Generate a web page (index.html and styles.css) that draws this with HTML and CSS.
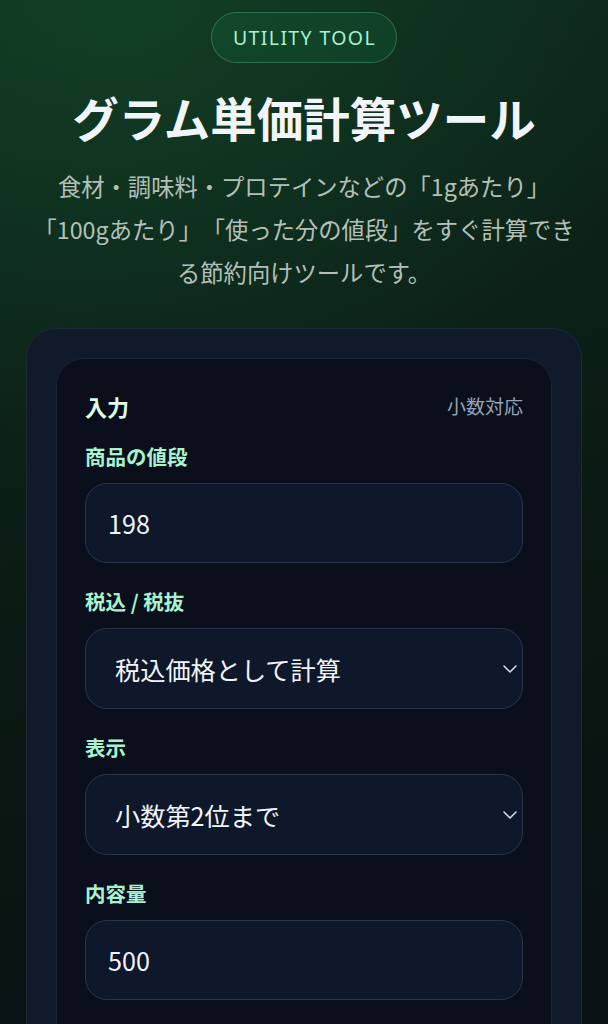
FILE: index.html
```html
<!DOCTYPE html>
<html lang="ja">
<head>
<meta charset="utf-8">
<title>グラム単価計算ツール</title>
<link rel="stylesheet" href="styles.css">
</head>
<body>
<main class="page">
  <header class="hero">
    <span class="badge">UTILITY TOOL</span>
    <h1 class="title">グラム単価計算ツール</h1>
    <p class="lead">食材・調味料・プロテインなどの「1gあたり」「100gあたり」「使った分の値段」をすぐ計算できる節約向けツールです。</p>
  </header>

  <section class="shell">
    <div class="panel">
      <div class="panel-head">
        <h2 class="panel-title">入力</h2>
        <span class="panel-note">小数対応</span>
      </div>

      <div class="fields">
        <div class="field">
          <label class="field-label" for="price">商品の値段</label>
          <input class="control" id="price" type="text" value="198">
        </div>

        <div class="field">
          <label class="field-label" for="tax">税込 / 税抜</label>
          <div class="select-wrap">
            <select class="control select" id="tax">
              <option>税込価格として計算</option>
              <option>税抜価格として計算</option>
            </select>
            <svg class="chevron" viewBox="0 0 14 8" width="14" height="8" aria-hidden="true"><path d="M1 1 L7 7 L13 1" fill="none" stroke="#d8dee8" stroke-width="1.5" stroke-linecap="round" stroke-linejoin="round"/></svg>
          </div>
        </div>

        <div class="field">
          <label class="field-label" for="digits">表示</label>
          <div class="select-wrap">
            <select class="control select" id="digits">
              <option>小数第2位まで</option>
              <option>小数第1位まで</option>
            </select>
            <svg class="chevron" viewBox="0 0 14 8" width="14" height="8" aria-hidden="true"><path d="M1 1 L7 7 L13 1" fill="none" stroke="#d8dee8" stroke-width="1.5" stroke-linecap="round" stroke-linejoin="round"/></svg>
          </div>
        </div>

        <div class="field">
          <label class="field-label" for="amount">内容量</label>
          <input class="control" id="amount" type="text" value="500">
        </div>
      </div>
    </div>
  </section>
</main>
</body>
</html>
```

FILE: styles.css
```css
* {
  box-sizing: border-box;
}

html, body {
  margin: 0;
  padding: 0;
}

body {
  height: 1024px;
  font-family: "Noto Sans CJK JP", "Noto Sans", sans-serif;
  color: #e2e8f0;
  text-spacing-trim: space-all;
  background:
    radial-gradient(ellipse 90% 45% at 20% 0%, rgba(22, 78, 44, 0.55) 0%, rgba(22, 78, 44, 0) 100%),
    linear-gradient(165deg, #0e2c1d 0%, #0c2118 35%, #0a1712 65%, #0a1114 100%);
  overflow: hidden;
}

.page {
  padding: 12px 26px 0;
}

.hero {
  display: flex;
  flex-direction: column;
  align-items: center;
  text-align: center;
}

.badge {
  display: inline-block;
  padding: 11px 20px 11px 21px;
  border: 1px solid rgba(110, 231, 183, 0.28);
  border-radius: 999px;
  background: rgba(16, 120, 70, 0.22);
  color: #a7f3d0;
  font-family: "Noto Sans", sans-serif;
  font-size: 19.5px;
  line-height: 27px;
  letter-spacing: 0.07em;
}

.title {
  margin: 24px 0 0;
  font-size: 46.5px;
  line-height: 60px;
  font-weight: 700;
  color: #f1f5f9;
  letter-spacing: 0;
}

.lead {
  margin: 18px 0 0;
  max-width: 556px;
  font-size: 23.3px;
  line-height: 43px;
  color: #b3c0b9;
}

.shell {
  margin-top: 34px;
  padding: 29px;
  border: 1px solid #1d2839;
  border-radius: 30px;
  background: #101a29;
}

.panel {
  padding: 30px 28px 120px;
  border: 1px solid #1a2434;
  border-radius: 28px;
  background: #0a0f1b;
}

.panel-head {
  display: flex;
  align-items: center;
  justify-content: space-between;
  height: 34px;
}

.panel-title {
  margin: 0;
  font-size: 22px;
  line-height: 34px;
  font-weight: 700;
  color: #dcfce7;
}

.panel-note {
  font-size: 19px;
  line-height: 34px;
  color: #94a3b8;
}

.fields {
  display: flex;
  flex-direction: column;
  gap: 23px;
  margin-top: 18px;
}

.field {
  display: flex;
  flex-direction: column;
  gap: 12px;
}

.field-label {
  font-size: 20.5px;
  line-height: 30px;
  font-weight: 700;
  color: #a7f3d0;
}

.control {
  display: block;
  width: 100%;
  height: 80px;
  margin: 0;
  padding: 0 22px;
  border: 1px solid #2a3547;
  border-radius: 22px;
  background: #0f172a;
  color: #f1f5f9;
  font-family: "Noto Sans CJK JP", "Noto Sans", sans-serif;
  font-size: 25.2px;
  outline: none;
}

.select-wrap {
  position: relative;
}

.select {
  appearance: none;
  -webkit-appearance: none;
  padding-left: 29px;
  padding-right: 44px;
  height: 81px;
}

.chevron {
  position: absolute;
  right: 6px;
  top: 50%;
  margin-top: -4px;
  pointer-events: none;
}
```
